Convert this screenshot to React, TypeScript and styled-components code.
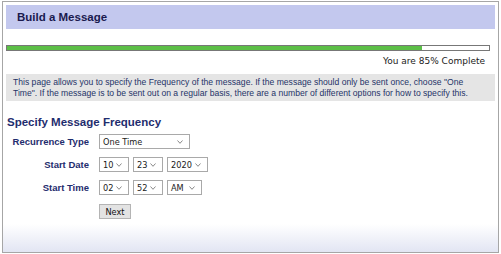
import React from "react";
import styled, { createGlobalStyle } from "styled-components";

const Global = createGlobalStyle`
  html, body { margin: 0; padding: 0; background: #ffffff; }
  body { font-family: "Liberation Sans", Arial, sans-serif; }
`;

const Page = styled.div`
  box-sizing: border-box;
  width: 497px;
  height: 252px;
  margin: 1px 0 0 2px;
  border: 1px solid #a6a6a6;
  padding: 3px;
  background: linear-gradient(to bottom, #ffffff 0, #ffffff 222px, #e2e5f3 100%);
  display: flex;
  flex-direction: column;
`;

const Header = styled.div`
  height: 24px;
  background: #c3c8ee;
  display: flex;
  align-items: center;
  padding-left: 11px;
  font-weight: bold;
  font-size: 11.5px;
  color: #1a1a4e;
`;

const Progress = styled.div`
  margin: 16px 5px 0 0;
  height: 4px;
  border: 1px solid #777777;
  background: #ffffff;
  display: flex;
`;

const ProgressFill = styled.div<{ $pct: number }>`
  width: ${(p) => p.$pct}%;
  background: #5cbf47;
`;

const Status = styled.div`
  text-align: right;
  margin: 4px 10px 0 0;
  font-family: "DejaVu Sans", Verdana, sans-serif;
  font-size: 9px;
  color: #222222;
  line-height: 12px;
`;

const Info = styled.div`
  margin-top: 7px;
  background: #e5e5e5;
  padding: 3px 7px 2px;
  font-size: 8.6px;
  line-height: 11px;
  color: #1f3468;
`;

const Heading = styled.h2`
  margin: 14px 0 0 1px;
  font-size: 11.5px;
  font-weight: bold;
  color: #1f2d6e;
  line-height: 14px;
`;

const Form = styled.div`
  margin-top: 5px;
  display: grid;
  grid-template-columns: 83px auto;
  column-gap: 10px;
  row-gap: 8px;
  align-items: center;
`;

const Label = styled.div`
  text-align: right;
  font-size: 9.5px;
  font-weight: bold;
  color: #1f2d6e;
`;

const Controls = styled.div`
  display: flex;
  gap: 4px;
`;

const SelectBox = styled.div<{ $w: number }>`
  position: relative;
  box-sizing: border-box;
  width: ${(p) => p.$w}px;
  height: 15px;
  border: 1px solid #a9a9a9;
  background: #ffffff;
  display: flex;
  align-items: center;
  padding-left: 3px;
  font-family: "DejaVu Sans", Verdana, sans-serif;
  font-size: 8.2px;
  color: #1a1a1a;
`;

const Chevron = styled.svg`
  position: absolute;
  right: 6px;
  top: 5px;
  width: 6px;
  height: 4px;
`;

const Button = styled.button`
  grid-column: 2;
  justify-self: start;
  margin-top: 1px;
  box-sizing: border-box;
  width: 32px;
  height: 15px;
  padding: 0;
  border: 1px solid #b4b4b4;
  background: #e3e3e3;
  font-family: "DejaVu Sans", Verdana, sans-serif;
  font-size: 8.2px;
  color: #111111;
`;

function Select({ value, width }: { value: string; width: number }) {
  return (
    <SelectBox $w={width}>
      {value}
      <Chevron viewBox="0 0 6 4">
        <path d="M0.5 0.5 L3 3.3 L5.5 0.5" fill="none" stroke="#6a6a6a" strokeWidth="0.8" />
      </Chevron>
    </SelectBox>
  );
}

export default function App() {
  const pct = 85;
  return (
    <>
      <Global />
      <Page>
        <Header>Build a Message</Header>
        <Progress>
          <ProgressFill $pct={pct + 1} />
        </Progress>
        <Status>You are {pct}% Complete</Status>
        <Info>
          This page allows you to specify the Frequency of the message. If the message should only be sent once, choose "One
          Time". If the message is to be sent out on a regular basis, there are a number of different options for how to specify this.
        </Info>
        <Heading>Specify Message Frequency</Heading>
        <Form>
          <Label>Recurrence Type</Label>
          <Controls>
            <Select value="One Time" width={91} />
          </Controls>
          <Label>Start Date</Label>
          <Controls>
            <Select value="10" width={30} />
            <Select value="23" width={30} />
            <Select value="2020" width={41} />
          </Controls>
          <Label>Start Time</Label>
          <Controls>
            <Select value="02" width={30} />
            <Select value="52" width={30} />
            <Select value="AM" width={35} />
          </Controls>
          <Button>Next</Button>
        </Form>
      </Page>
    </>
  );
}
